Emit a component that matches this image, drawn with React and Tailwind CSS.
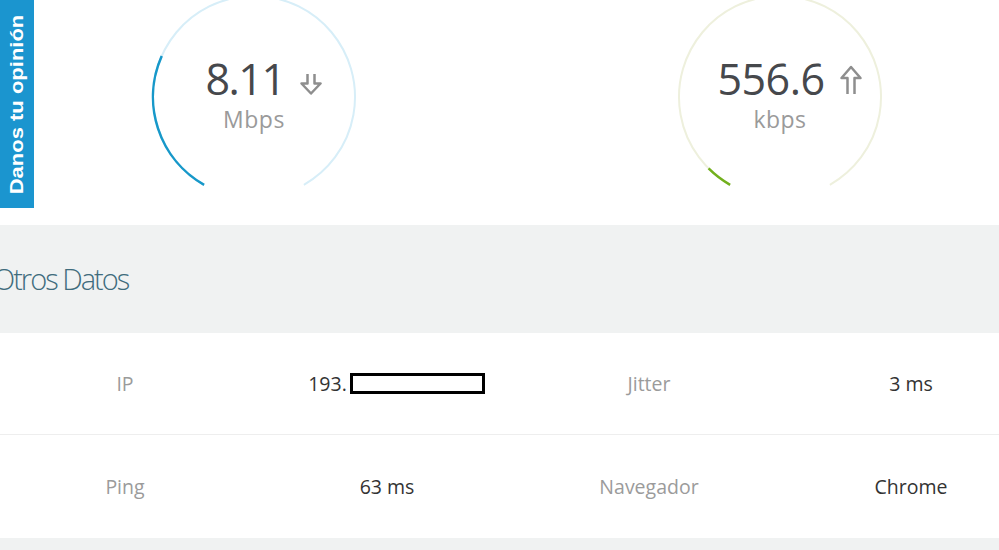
import React from "react";

const R = 101;
const C = 105;

const pt = (deg) => {
  const a = (deg * Math.PI) / 180;
  return [C - R * Math.sin(a), C + R * Math.cos(a)];
};

const arc = (from, to) => {
  const [x1, y1] = pt(from);
  const [x2, y2] = pt(to);
  const large = to - from > 180 ? 1 : 0;
  return `M${x1} ${y1} A${R} ${R} 0 ${large} 1 ${x2} ${y2}`;
};

const ArrowDown = () => (
  <svg width="24" height="22" viewBox="0 0 24 22">
    <path
      d="M8.5 1 V10.5 H2.5 L12 20.5 L21.5 10.5 H15.5 V1"
      fill="none"
      stroke="#8e8e8e"
      strokeWidth="2.5"
      strokeLinejoin="round"
    />
  </svg>
);

const ArrowUp = () => (
  <svg width="24" height="30" viewBox="0 0 24 30">
    <path
      d="M8.5 29 V13 H2.5 L12 2 L21.5 13 H15.5 V29"
      fill="none"
      stroke="#8e8e8e"
      strokeWidth="2.5"
      strokeLinejoin="round"
    />
  </svg>
);

const Gauge = ({ value, unit, track, color, progress, up, tight }) => (
  <div className="relative mt-[-8px] h-[210px] w-[210px]">
    <svg width="210" height="210" className="absolute inset-0">
      <path d={arc(29.6, 330.4)} fill="none" stroke={track} strokeWidth="2" />
      <path d={arc(29.6, progress)} fill="none" stroke={color} strokeWidth="2.5" />
    </svg>
    <div className="relative flex flex-col items-center pt-[63px]">
      <div className="flex items-baseline gap-[14px] pl-[20px]">
        <span
          className={`text-[43px] leading-[48px] text-[#46484c] ${
            tight ? "tracking-[-1.5px]" : "tracking-[-0.5px]"
          }`}
        >
          {value}
        </span>
        {up ? <ArrowUp /> : <ArrowDown />}
      </div>
      <span className="mt-[2px] text-[23px] leading-[28px] tracking-[0.5px] text-[#9a9a9a]">
        {unit}
      </span>
    </div>
  </div>
);

const Cell = ({ children, label }) => (
  <div
    className={`flex items-center justify-center text-[19.5px] ${
      label ? "text-[#9b9b9b]" : "text-[#333]"
    }`}
  >
    {children}
  </div>
);

export default function App() {
  return (
    <div
      className="relative h-[550px] w-[999px] overflow-hidden bg-white"
      style={{ fontFamily: '"Open Sans", "Noto Sans", sans-serif' }}
    >
      <div className="ml-[-6px] w-[1048px]">
        <div className="grid h-[225px] grid-cols-2">
          <div className="flex justify-center pr-[4px]">
            <Gauge value="8.11" unit="Mbps" track="#d7eef8" color="#1798c9" progress={114} tight />
          </div>
          <div className="flex justify-center">
            <Gauge value="556.6" unit="kbps" track="#eef0dd" color="#72b01d" progress={45} up />
          </div>
        </div>

        <div className="flex h-[108px] items-center bg-[#f0f2f2]">
          <h2 className="ml-[-1px] text-[29px] font-light tracking-[-2px] text-[#3f6c7d]">
            Otros Datos
          </h2>
        </div>

        <div className="grid h-[102px] grid-cols-4 border-b border-[#eeeeee]">
          <Cell label>IP</Cell>
          <Cell>
            <span className="pl-[19px]">193.</span>
            <span className="ml-[3px] inline-block h-[21px] w-[135px] border-[3px] border-black"></span>
          </Cell>
          <Cell label>Jitter</Cell>
          <Cell>3 ms</Cell>
        </div>
        <div className="grid h-[103px] grid-cols-4">
          <Cell label>Ping</Cell>
          <Cell>63 ms</Cell>
          <Cell label>Navegador</Cell>
          <Cell>Chrome</Cell>
        </div>
        <div className="h-[20px] bg-[#f0f2f2]"></div>
      </div>

      <div className="absolute left-0 top-0 flex h-[208px] w-[34px] items-center justify-center bg-[#1b95cf]">
        <span
          className="whitespace-nowrap text-[22px] font-bold text-white"
          style={{
            fontFamily: '"Liberation Sans", Arial, sans-serif',
            transform: "rotate(-90deg) scaleY(0.8)",
          }}
        >
          Danos tu opinión
        </span>
      </div>
    </div>
  );
}
